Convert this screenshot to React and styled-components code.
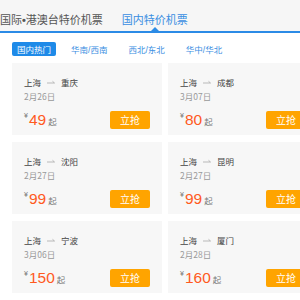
import React from "react";
import styled, { createGlobalStyle } from "styled-components";

const Global = createGlobalStyle`
  html, body { margin: 0; padding: 0; background: #fff; }
  body { width: 300px; height: 300px; overflow: hidden; font-family: "Noto Sans CJK SC", "Noto Sans", sans-serif; }
`;

const Page = styled.div`
  width: 300px;
  overflow: hidden;
`;

const TabBar = styled.div`
  display: flex;
  align-items: flex-start;
  height: 31px;
  background: #f6f6f6;
  border-bottom: 2px solid #2b8be6;
  gap: 19px;
  white-space: nowrap;
`;

const Tab = styled.div`
  position: relative;
  font-size: 11px;
  line-height: 14px;
  padding-top: 12px;
  color: ${(p) => (p.$active ? "#3a8ee2" : "#555")};
  &::after {
    content: "";
    display: ${(p) => (p.$active ? "block" : "none")};
    position: absolute;
    left: 50%;
    bottom: -5px;
    margin-left: -4px;
    border-left: 4px solid transparent;
    border-right: 4px solid transparent;
    border-bottom: 4px solid #2b8be6;
  }
`;

const Dot = styled.span`
  font-family: "Liberation Sans", sans-serif;
  font-weight: bold;
`;

const FilterRow = styled.div`
  display: flex;
  align-items: center;
  margin: 9px 0 0 12px;
  height: 14px;
`;

const Filter = styled.div`
  font-size: 8.5px;
  line-height: 14px;
  height: 14px;
  box-sizing: border-box;
  width: ${(p) => (p.$active ? "44px" : "auto")};
  text-align: center;
  margin-right: ${(p) => (p.$active ? "15px" : "21px")};
  color: ${(p) => (p.$active ? "#fff" : "#3a8ee2")};
  background: ${(p) => (p.$active ? "#1e8ae8" : "transparent")};
  border-radius: 2px;
`;

const Slash = styled.span`
  font-family: "Liberation Sans", sans-serif;
`;

const Grid = styled.div`
  display: grid;
  grid-template-columns: 150px 150px;
  column-gap: 6px;
  row-gap: 7px;
  margin: 7px 0 0 12px;
`;

const Card = styled.div`
  background: #f7f7f7;
  height: 72px;
  box-sizing: border-box;
  padding: 13px 12px 0 12px;
`;

const Route = styled.div`
  display: flex;
  align-items: center;
  gap: 6px;
  font-size: 8.5px;
  line-height: 12px;
  color: #444;
`;

const DateText = styled.div`
  margin-top: 2px;
  font-size: 8.5px;
  line-height: 12px;
  color: #999;
`;

const Bottom = styled.div`
  display: flex;
  align-items: center;
  justify-content: space-between;
  margin-top: 9px;
  height: 18px;
`;

const Price = styled.div`
  display: flex;
  align-items: baseline;
`;

const Yen = styled.span`
  font-family: "Liberation Sans", sans-serif;
  font-size: 7px;
  color: #777;
  align-self: flex-start;
  margin-top: 1px;
  margin-right: 1px;
`;

const Num = styled.span`
  font-family: "Liberation Sans", Arial, sans-serif;
  font-size: 15.5px;
  line-height: 18px;
  color: #ff5a1e;
`;

const Qi = styled.span`
  font-size: 8.5px;
  color: #777;
  margin-left: 2px;
`;

const Buy = styled.div`
  width: 40px;
  height: 18px;
  line-height: 18px;
  text-align: center;
  background: #ffa400;
  color: #fff;
  font-size: 10px;
  border-radius: 2px;
`;

const Arrow = () => (
  <svg width="8" height="6" viewBox="0 0 8 6">
    <path d="M0 4 H7.5 M5.5 2.3 L7.5 4" stroke="#aaa" strokeWidth="0.8" fill="none" />
  </svg>
);

const flights = [
  { to: "重庆", date: "2月26日", price: 49 },
  { to: "成都", date: "3月07日", price: 80 },
  { to: "沈阳", date: "2月27日", price: 99 },
  { to: "昆明", date: "2月27日", price: 99 },
  { to: "宁波", date: "3月06日", price: 150 },
  { to: "厦门", date: "2月28日", price: 160 },
];

const regions = [
  ["华南", "西南"],
  ["西北", "东北"],
  ["华中", "华北"],
];

export default function App() {
  return (
    <Page>
      <Global />
      <TabBar>
        <Tab>
          国际<Dot>•</Dot>港澳台特价机票
        </Tab>
        <Tab $active>国内特价机票</Tab>
      </TabBar>
      <FilterRow>
        <Filter $active>国内热门</Filter>
        {regions.map(([a, b]) => (
          <Filter key={a}>
            {a}
            <Slash>/</Slash>
            {b}
          </Filter>
        ))}
      </FilterRow>
      <Grid>
        {flights.map((f, i) => (
          <Card key={i}>
            <Route>
              <span>上海</span>
              <Arrow />
              <span>{f.to}</span>
            </Route>
            <DateText>{f.date}</DateText>
            <Bottom>
              <Price>
                <Yen>¥</Yen>
                <Num>{f.price}</Num>
                <Qi>起</Qi>
              </Price>
              <Buy>立抢</Buy>
            </Bottom>
          </Card>
        ))}
      </Grid>
    </Page>
  );
}
